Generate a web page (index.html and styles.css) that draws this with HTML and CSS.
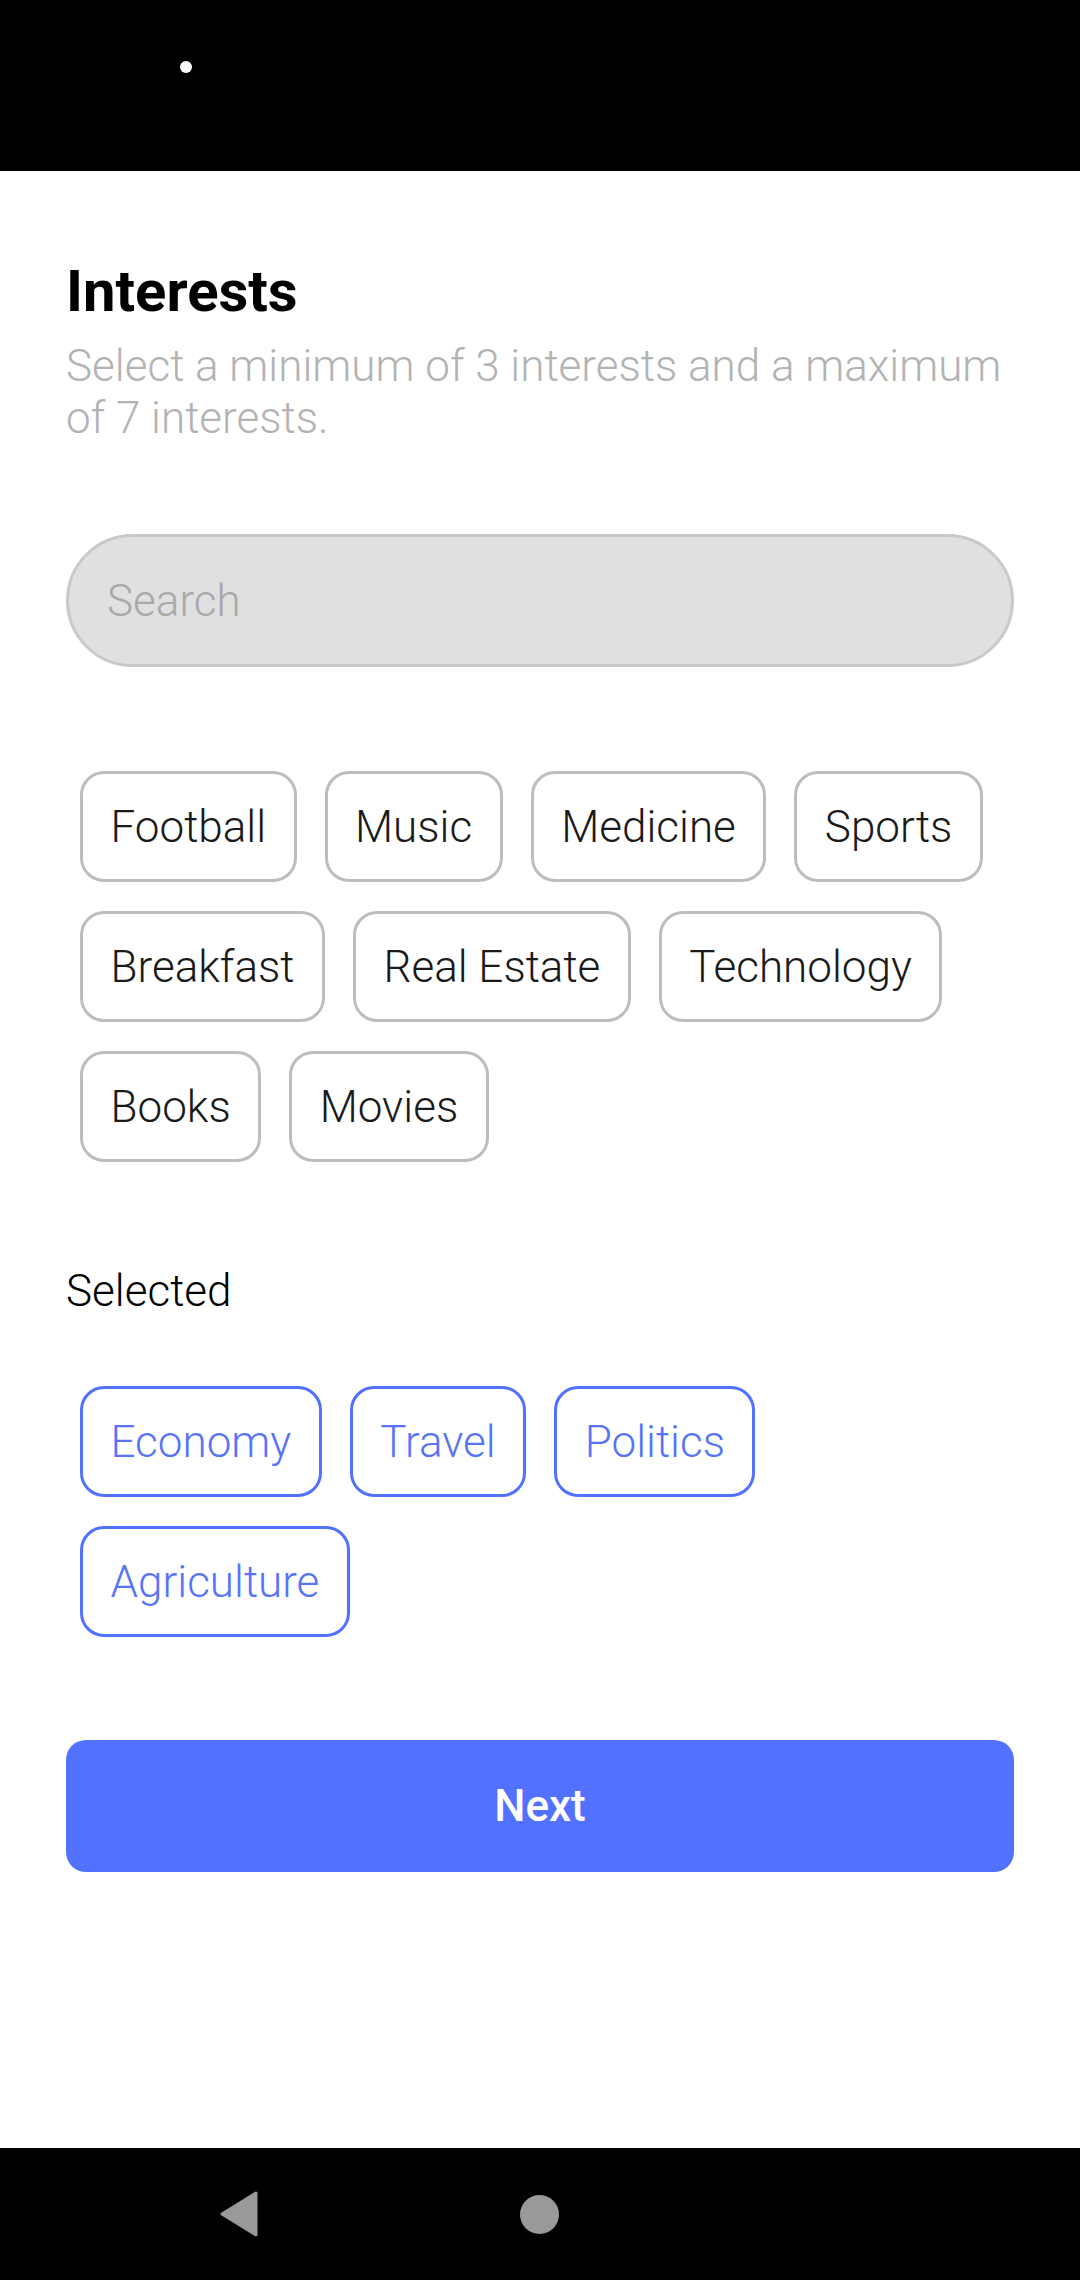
FILE: index.html
```html
<!DOCTYPE html>
<html lang="en">
<head>
<meta charset="utf-8">
<title>Interests</title>
<link rel="stylesheet" href="styles.css">
</head>
<body>
<div class="screen">
  <div class="statusbar"><span class="cam-dot"></span></div>
  <main class="content">
    <h1 class="title">Interests</h1>
    <p class="subtitle">Select a minimum of 3 interests and a maximum of 7 interests.</p>
    <div class="search"><span class="placeholder">Search</span></div>
    <div class="chips chips-available">
      <span class="chip">Football</span>
      <span class="chip">Music</span>
      <span class="chip">Medicine</span>
      <span class="chip">Sports</span>
      <span class="chip">Breakfast</span>
      <span class="chip">Real Estate</span>
      <span class="chip">Technology</span>
      <span class="chip">Books</span>
      <span class="chip">Movies</span>
    </div>
    <h2 class="section-label">Selected</h2>
    <div class="chips chips-selected">
      <span class="chip chip-on">Economy</span>
      <span class="chip chip-on">Travel</span>
      <span class="chip chip-on">Politics</span>
      <span class="chip chip-on">Agriculture</span>
    </div>
    <button class="next">Next</button>
  </main>
  <nav class="navbar">
    <svg class="nav-back" width="40" height="48" viewBox="0 0 40 48">
      <path d="M37 3 L3 24 L37 45 Z" fill="#999999" stroke="#999999" stroke-width="3" stroke-linejoin="round"/>
    </svg>
    <span class="nav-home"></span>
  </nav>
</div>
</body>
</html>
```
FILE: styles.css
```css
* { box-sizing: border-box; }
html, body { margin: 0; padding: 0; background: #000; }
body { font-family: Roboto, "Noto Sans", "Liberation Sans", sans-serif; }

.screen {
  width: 1080px;
  height: 2280px;
  display: flex;
  flex-direction: column;
  background: #fff;
}

.statusbar {
  height: 171px;
  background: #000;
  padding: 61px 0 0 180px;
  flex: none;
}
.cam-dot {
  display: block;
  width: 12px;
  height: 12px;
  border-radius: 50%;
  background: #fff;
}

.content {
  flex: 1;
  padding: 0 66px;
  display: flex;
  flex-direction: column;
}

.title {
  margin: 86px 0 0;
  font-size: 58px;
  line-height: 68px;
  font-weight: 700;
  color: #000;
}

.subtitle {
  margin: 15px 0 0;
  font-size: 44px;
  line-height: 52px;
  font-weight: 300;
  color: #b3b3b3;
}

.search {
  margin-top: 90px;
  height: 133px;
  border: 3px solid #c9c9c9;
  border-radius: 67px;
  background: #e0e0e0;
  display: flex;
  align-items: center;
  padding-left: 38px;
}
.placeholder {
  font-size: 44px;
  font-weight: 300;
  color: #a9a9a9;
}

.chips {
  display: flex;
  flex-wrap: wrap;
  gap: 29px 28px;
  padding: 0 14px;
}
.chips-available { margin-top: 104px; }
.chips-selected { margin-top: 69px; }

.chip {
  height: 111px;
  display: flex;
  align-items: center;
  padding: 0 27.5px;
  border: 3px solid #bdbdbd;
  border-radius: 24px;
  font-size: 44px;
  font-weight: 300;
  color: #1a1a1a;
  white-space: nowrap;
}
.chip-on {
  border-color: #5271ff;
  color: #5773f7;
}

.section-label {
  margin: 103px 0 0;
  font-size: 44px;
  line-height: 52px;
  font-weight: 300;
  color: #000;
}

.next {
  margin-top: 103px;
  height: 132px;
  width: 100%;
  border: none;
  border-radius: 20px;
  background: #5271ff;
  color: #fff;
  font-family: Roboto, "Noto Sans", "Liberation Sans", sans-serif;
  font-size: 44px;
  font-weight: 500;
}

.navbar {
  flex: none;
  height: 132px;
  background: #000;
  display: flex;
  align-items: center;
  padding-left: 219px;
  gap: 261px;
}
.nav-back { display: block; }
.nav-home {
  display: block;
  width: 39px;
  height: 39px;
  border-radius: 50%;
  background: #999999;
}
```
